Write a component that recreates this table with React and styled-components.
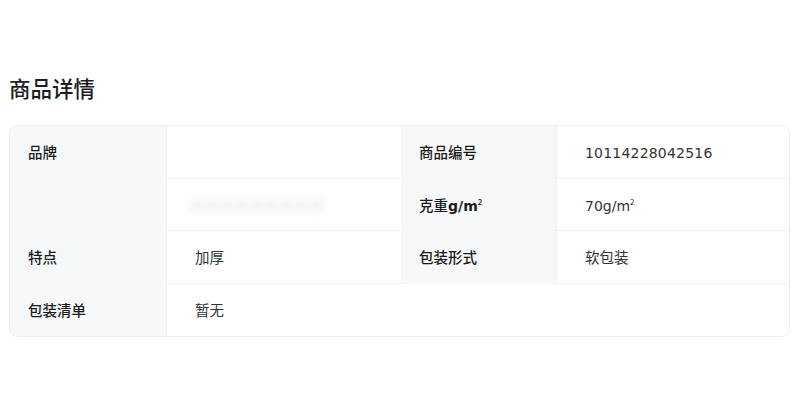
import React from "react";
import styled, { createGlobalStyle } from "styled-components";

const Global = createGlobalStyle`
  html, body { margin: 0; padding: 0; background: #fff; }
  body { font-family: "Liberation Sans", "Noto Sans CJK SC", sans-serif; }
`;

const Page = styled.div`
  padding: 72px 10px 0 9px;
`;

const Title = styled.h2`
  margin: 0 0 22px 0;
  font-size: 21.5px;
  line-height: 31px;
  font-weight: 500;
  color: #1d1d1f;
  font-family: "Noto Sans CJK SC", sans-serif;
`;

const Table = styled.div`
  display: grid;
  grid-template-columns: 157px 234px 156px 1fr;
  grid-auto-rows: 52.5px;
  border: 1px solid #eceef1;
  border-radius: 8px;
  overflow: hidden;
  font-family: "Noto Sans CJK SC", sans-serif;
`;

const Label = styled.div`
  grid-row: ${(p) => (p.$rows ? `span ${p.$rows}` : "auto")};
  background: #f7f8fa;
  padding: 16px 18px;
  font-size: 14.5px;
  line-height: 20px;
  font-weight: 500;
  color: #1a1a1a;
  border-right: 1px solid #eef0f3;
`;

const Value = styled.div`
  grid-column: ${(p) => (p.$span ? `span ${p.$span}` : "auto")};
  padding: 16px 28px;
  font-size: 14.5px;
  line-height: 20px;
  color: #333;
  border-bottom: ${(p) => (p.$last ? "none" : "1px solid #eef0f3")};
  font-family: "Noto Sans CJK SC", sans-serif;
`;

const Latin = styled.span`
  font-family: "DejaVu Sans", sans-serif;
  font-size: 14px;
  letter-spacing: ${(p) => (p.$wide ? "0.2px" : "0")};
  font-weight: ${(p) => (p.$bold ? 600 : 400)};
`;

const Blurred = styled.span`
  display: inline-block;
  margin-left: -6px;
  color: #f1f1f1;
  filter: blur(5px);
  font-size: 15px;
`;

const Sup = styled.sup`
  font-size: 8px;
  vertical-align: 6px;
  line-height: 0;
`;

export default function App() {
  return (
    <>
      <Global />
      <Page>
        <Title>商品详情</Title>
        <Table>
          <Label $rows={2}>品牌</Label>
          <Value />
          <Label>商品编号</Label>
          <Value>
            <Latin $wide>10114228042516</Latin>
          </Value>
          <Value>
            <Blurred>■■■■■■■■■</Blurred>
          </Value>
          <Label>
            克重<Latin $bold>g/m</Latin>
            <Sup>2</Sup>
          </Label>
          <Value>
            <Latin>70g/m</Latin>
            <Sup>2</Sup>
          </Value>
          <Label>特点</Label>
          <Value>加厚</Value>
          <Label>包装形式</Label>
          <Value>软包装</Value>
          <Label>包装清单</Label>
          <Value $span={3} $last>
            暂无
          </Value>
        </Table>
      </Page>
    </>
  );
}
